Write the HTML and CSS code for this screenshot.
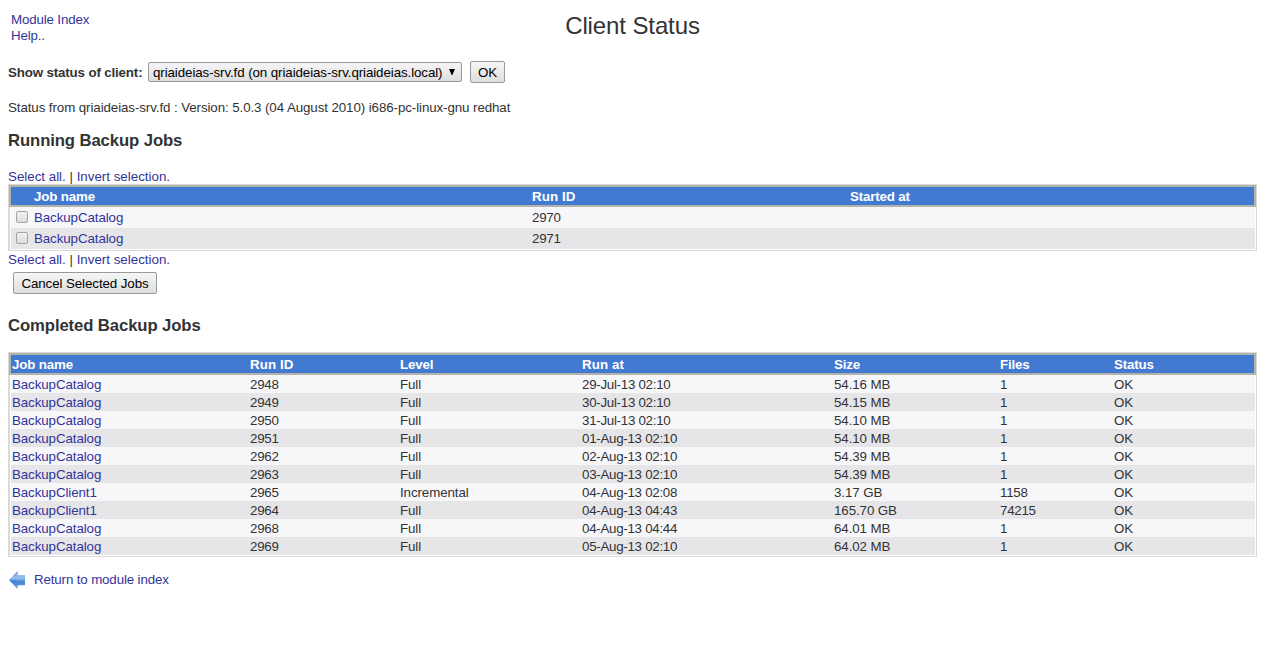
FILE: index.html
```html
<!DOCTYPE html>
<html lang="en">
<head>
<meta charset="utf-8">
<title>Client Status</title>
<link rel="stylesheet" href="styles.css">
</head>
<body>
<header class="top">
  <nav class="top-links"><a href="#">Module Index</a><a href="#">Help..</a></nav>
  <h1>Client Status</h1>
</header>
<form class="picker">
  <b>Show status of client:</b>
  <button type="button" class="control select"><span>qriaideias-srv.fd (on qriaideias-srv.qriaideias.local)</span><svg width="6" height="6" viewBox="0 0 6 6"><path d="M0 0H6L3.4 6H2.6Z"/></svg></button>
  <button type="button" class="control ok">OK</button>
</form>
<p class="version">Status from qriaideias-srv.fd : Version: 5.0.3 (04 August 2010) i686-pc-linux-gnu redhat</p>
<h2>Running Backup Jobs</h2>
<p class="selectors"><a href="#">Select all.</a> | <a href="#">Invert selection.</a></p>
<section class="table running">
  <div class="row head"><span></span><span>Job name</span><span class="wide">Run ID</span><span>Started at</span></div>
  <div class="row"><input type="checkbox" class="check"><a href="#">BackupCatalog</a><span class="num">2970</span><span></span></div>
  <div class="row"><input type="checkbox" class="check"><a href="#">BackupCatalog</a><span class="num">2971</span><span></span></div>
</section>
<p class="selectors below"><a href="#">Select all.</a> | <a href="#">Invert selection.</a></p>
<button type="button" class="control cancel">Cancel Selected Jobs</button>
<h2 class="second">Completed Backup Jobs</h2>
<section class="table completed">
  <div class="row head"><span>Job name</span><span class="wide">Run ID</span><span>Level</span><span class="wide">Run at</span><span>Size</span><span>Files</span><span>Status</span></div>
  <div class="row"><a href="#">BackupCatalog</a><span class="num">2948</span><span>Full</span><span class="num">29-Jul-13 02:10</span><span>54.16 MB</span><span class="num">1</span><span>OK</span></div>
  <div class="row"><a href="#">BackupCatalog</a><span class="num">2949</span><span>Full</span><span class="num">30-Jul-13 02:10</span><span>54.15 MB</span><span class="num">1</span><span>OK</span></div>
  <div class="row"><a href="#">BackupCatalog</a><span class="num">2950</span><span>Full</span><span class="num">31-Jul-13 02:10</span><span>54.10 MB</span><span class="num">1</span><span>OK</span></div>
  <div class="row"><a href="#">BackupCatalog</a><span class="num">2951</span><span>Full</span><span class="num">01-Aug-13 02:10</span><span>54.10 MB</span><span class="num">1</span><span>OK</span></div>
  <div class="row"><a href="#">BackupCatalog</a><span class="num">2962</span><span>Full</span><span class="num">02-Aug-13 02:10</span><span>54.39 MB</span><span class="num">1</span><span>OK</span></div>
  <div class="row"><a href="#">BackupCatalog</a><span class="num">2963</span><span>Full</span><span class="num">03-Aug-13 02:10</span><span>54.39 MB</span><span class="num">1</span><span>OK</span></div>
  <div class="row"><a href="#">BackupClient1</a><span class="num">2965</span><span>Incremental</span><span class="num">04-Aug-13 02:08</span><span>3.17 GB</span><span class="num">1158</span><span>OK</span></div>
  <div class="row"><a href="#">BackupClient1</a><span class="num">2964</span><span>Full</span><span class="num">04-Aug-13 04:43</span><span>165.70 GB</span><span class="num">74215</span><span>OK</span></div>
  <div class="row"><a href="#">BackupCatalog</a><span class="num">2968</span><span>Full</span><span class="num">04-Aug-13 04:44</span><span>64.01 MB</span><span class="num">1</span><span>OK</span></div>
  <div class="row"><a href="#">BackupCatalog</a><span class="num">2969</span><span>Full</span><span class="num">05-Aug-13 02:10</span><span>64.02 MB</span><span class="num">1</span><span>OK</span></div>
</section>
<footer class="back">
  <svg width="17" height="18" viewBox="0 0 17 18">
    <defs><linearGradient id="arrow" x1="0" y1="0" x2="0" y2="1"><stop offset="0" stop-color="#5c93d8"/><stop offset=".4" stop-color="#8fb9ea"/><stop offset=".55" stop-color="#3f7fd6"/><stop offset="1" stop-color="#6ba0e6"/></linearGradient></defs>
    <path d="M0 9L8.6 0V4.3H16V14.2H8.6V18Z" fill="url(#arrow)"/>
    <path d="M2 8.6L8 2.2V5H15.5V10.5Q9 10.5 2 8.6Z" fill="#a9caef" opacity=".3"/>
  </svg>
  <a href="#">Return to module index</a>
</footer>
</body>
</html>
```
FILE: styles.css
```css
* { box-sizing: border-box; }
body { margin: 0; padding: 12px 7px 0 8px; background: #fff; color: #333; font: 13.33px/16px "Liberation Sans", Arial, sans-serif; letter-spacing: -.09px; white-space: nowrap; }
a { color: #333399; text-decoration: none; }
h1, h2, p { margin: 0; }
.top { display: grid; grid-template-columns: 1fr auto 1fr; height: 49px; }
.top-links { display: flex; flex-direction: column; padding-left: 3px; letter-spacing: -.15px; }
h1 { font-size: 24px; line-height: 28px; font-weight: 400; letter-spacing: -.11px; }
.picker { display: flex; align-items: center; height: 22px; }
.picker b { padding-top: 2px; width: 134px; letter-spacing: -.15px; }
.control { margin: 0; padding: 1px 0 0; border: 1px solid #999; border-radius: 2px; background: linear-gradient(#f6f6f6, #dedede); color: #000; font: inherit; letter-spacing: -.09px; height: 22px; line-height: 19px; }
.select { display: flex; justify-content: space-between; align-items: center; width: 314px; height: 20px; margin-left: 6px; padding: 0 6px 0 4px; line-height: 18px; }
.select span { padding-top: 1px; }
.ok { width: 35px; margin-left: 8px; }
.version { margin-top: 17px; }
h2 { margin-top: 15px; font-size: 16.7px; line-height: 20px; letter-spacing: -.1px; }
.selectors { margin-top: 18px; height: 15px; letter-spacing: 0; }
.table { border: 1px solid #d9d9d9; border-left-width: 2px; padding: 0 0 1px; }
.row { display: grid; align-items: center; margin: 0 1px; height: 21px; background: #f7f7fa; }
.row:nth-child(odd) { background: #e6e6e8; }
.row.head { margin: 0 0 0 -1px; border: 2px solid #b3b3ad; height: 22px; padding-top: 2px; background: #437ad1; color: #fff; font-weight: 700; letter-spacing: -.16px; }
.row .wide { letter-spacing: .1px; }
.num { letter-spacing: -.28px; }
.running .row { grid-template-columns: 23px 498px 318px 1fr; }
.check { appearance: none; margin: -1px 0 0 5px; width: 12px; height: 12px; border: 1px solid #a3a3a3; border-radius: 2px; background: linear-gradient(#f1f1f1, #dcdcdc); }
.below { margin-top: 1px; height: 20px; }
.cancel { display: block; width: 144px; margin-left: 5px; }
.second { margin: 22px 0 16px; }
.completed .row { height: 18px; padding: 2px 0 0 1px; grid-template-columns: 238px 150px 182px 252px 166px 114px 1fr; }
.completed .row.head { height: 22px; }
.back { display: flex; align-items: center; gap: 8px; margin: 14px 0 0 1px; height: 18px; letter-spacing: -.14px; }
```
